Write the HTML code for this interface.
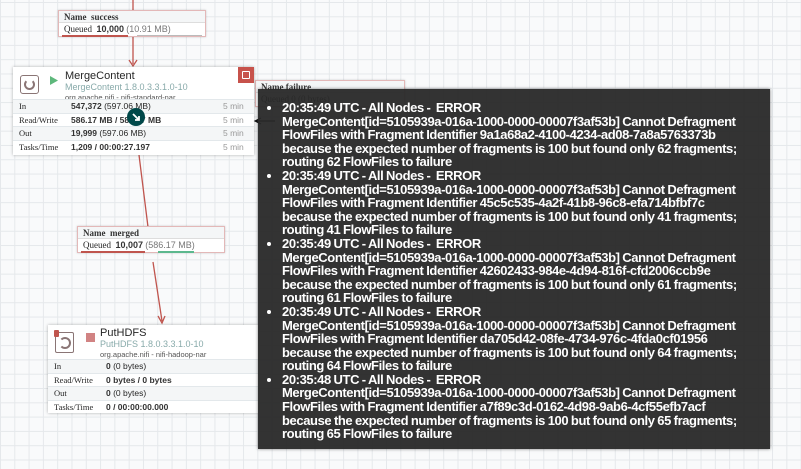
<!DOCTYPE html>
<html><head><style>
*{margin:0;padding:0;box-sizing:border-box}
body{width:801px;height:469px;overflow:hidden;position:relative;font-family:"Liberation Sans",sans-serif;
background-color:#f9fafb;
background-image:linear-gradient(#e5e8eb 1px,transparent 1px),linear-gradient(90deg,#e5e8eb 1px,transparent 1px);
background-size:14.3px 14.3px;background-position:0 2px}
.abs{position:absolute}
.lbl{position:absolute;background:#fff;border:1px solid #e3b8b8;box-shadow:0 0 2px rgba(0,0,0,.2);font-size:9px;color:#262626}
.lbl .r{height:12px;line-height:12px;padding-left:5px;font-family:"Liberation Serif",serif}
.lbl .r1{background:#f4f6f7;border-bottom:1px solid #ddd}
.card{position:absolute;background:#fff;box-shadow:0 0 3px rgba(0,0,0,.3);font-size:8.5px;color:#262626}
.row{height:13.5px;line-height:13.5px;position:relative;border-top:1px solid #e3e8eb}
.row.g{background:#f4f6f7}
.row span{position:absolute}
.k{font-family:"Liberation Serif",serif}
b{font-weight:bold;color:#333}
.t{color:#999}
.tip{position:absolute;left:258px;top:89px;width:512px;height:360px;background:rgba(40,40,40,.95);color:#fff;font-weight:bold;font-size:13px;line-height:13.6px;padding:12px 0 0 24px;box-shadow:0 0 3px rgba(0,0,0,.5);letter-spacing:-0.4px;word-spacing:-0.5px}
.tip ul{list-style:disc;padding-left:0;margin-left:0}
.tip li{margin-bottom:0;margin-left:0}
</style></head><body>
<svg class="abs" style="left:0;top:0" width="801" height="469">
<line x1="133" y1="0" x2="133" y2="10" stroke="#c0554e" stroke-width="1.3"/>
<line x1="133" y1="36" x2="133" y2="64" stroke="#c0554e" stroke-width="1.3"/>
<path d="M129 60 L133 66 L137 60" fill="none" stroke="#c0554e" stroke-width="1.3"/>
<line x1="139" y1="155" x2="148" y2="227" stroke="#c0554e" stroke-width="1.3"/>
<line x1="153" y1="262" x2="162" y2="321" stroke="#c0554e" stroke-width="1.3"/>
<path d="M158 316 L162 323 L165 316" fill="none" stroke="#c0554e" stroke-width="1.3"/>
</svg>
<div class="lbl" style="left:58px;top:10px;width:148px;height:27px">
<div class="r r1"><b>Name</b>&nbsp; <b>success</b></div>
<div class="r">Queued&nbsp; <b style="font-family:'Liberation Sans'">10,000</b> <span style="color:#777;font-family:'Liberation Sans'">(10.91 MB)</span></div>
<div class="abs" style="left:3px;top:24px;width:66px;height:2px;background:#c0554e"></div>
<div class="abs" style="left:78px;top:24px;width:65px;height:1px;background:#bbb"></div>
</div>
<div class="lbl" style="left:255px;top:80px;width:150px;height:27px">
<div class="r r1"><b>Name failure</b></div><div class="r">Queued 0 (0 bytes)</div></div>
<div class="card" style="left:13px;top:67px;width:241px;height:88px">
<div class="abs" style="left:7px;top:8px;width:19px;height:19px;border:1px solid #8a7575;border-radius:3px"></div>
<div class="abs" style="left:11px;top:12px;width:11px;height:11px;border:2px solid #8a7575;border-radius:50%;border-top-color:transparent"></div>
<svg class="abs" style="left:37px;top:9px" width="8" height="9"><path d="M0 0L8 4.5L0 9Z" fill="#5eb87c"/></svg>
<div class="abs" style="left:52px;top:3px;font-size:11px;color:#262626">MergeContent</div>
<div class="abs" style="left:52px;top:15px;font-size:9px;color:#8aa">MergeContent 1.8.0.3.3.1.0-10</div>
<div class="abs" style="left:52px;top:26px;font-size:7.5px;color:#555">org.apache.nifi - nifi-standard-nar</div>
<div class="abs" style="left:225px;top:0;width:16px;height:16px;background:#c7524b"><div class="abs" style="left:4px;top:4px;width:8px;height:8px;border:1px solid #fff;border-radius:1px"></div></div>
<div class="abs" style="left:0;top:32px;width:241px">
<div class="row g"><span class="k" style="left:6px">In</span><span style="left:58px"><b>547,372</b> (597.06 MB)</span><span class="t" style="left:210px">5 min</span></div>
<div class="row"><span class="k" style="left:6px">Read/Write</span><span style="left:58px"><b>586.17 MB / 586.17 MB</b></span><span class="t" style="left:210px">5 min</span></div>
<div class="row g"><span class="k" style="left:6px">Out</span><span style="left:58px"><b>19,999</b> (597.06 MB)</span><span class="t" style="left:210px">5 min</span></div>
<div class="row"><span class="k" style="left:6px">Tasks/Time</span><span style="left:58px"><b>1,209 / 00:00:27.197</b></span><span class="t" style="left:210px">5 min</span></div>
</div>
<div class="abs" style="left:114px;top:41px;width:18px;height:18px;border-radius:50%;background:#004849"><svg width="18" height="18"><path d="M6 6L12 12M12 8V12H8" stroke="#fff" stroke-width="1.8" fill="none"/></svg></div>
</div>
<div class="lbl" style="left:77px;top:226px;width:148px;height:27px">
<div class="r r1"><b>Name</b>&nbsp; <b>merged</b></div>
<div class="r">Queued&nbsp; <b style="font-family:'Liberation Sans'">10,007</b> <span style="color:#777;font-family:'Liberation Sans'">(586.17 MB)</span></div>
<div class="abs" style="left:3px;top:24px;width:64px;height:2px;background:#c0554e"></div>
<div class="abs" style="left:80px;top:24px;width:36px;height:2px;background:#5cb88e"></div>
</div>
<div class="card" style="left:48px;top:325px;width:210px;height:88px">
<div class="abs" style="left:7px;top:7px;width:19px;height:21px;border:1px solid #8a7575;border-radius:2px"></div>
<div class="abs" style="left:11px;top:12px;width:12px;height:12px;border:2px solid #8a7575;border-radius:50%;border-left-color:transparent"></div>
<div class="abs" style="left:6px;top:5px;width:5px;height:7px;background:#c0554e;border-radius:1px"></div>
<div class="abs" style="left:38px;top:8px;width:9px;height:9px;background:#d18383"></div>
<div class="abs" style="left:52px;top:2px;font-size:11px;color:#262626">PutHDFS</div>
<div class="abs" style="left:52px;top:14px;font-size:9px;color:#8aa">PutHDFS 1.8.0.3.3.1.0-10</div>
<div class="abs" style="left:52px;top:25px;font-size:7.5px;color:#555">org.apache.nifi - nifi-hadoop-nar</div>
<div class="abs" style="left:0;top:34px;width:210px">
<div class="row g"><span class="k" style="left:6px">In</span><span style="left:58px"><b>0</b> (0 bytes)</span></div>
<div class="row"><span class="k" style="left:6px">Read/Write</span><span style="left:58px"><b>0 bytes / 0 bytes</b></span></div>
<div class="row g"><span class="k" style="left:6px">Out</span><span style="left:58px"><b>0</b> (0 bytes)</span></div>
<div class="row"><span class="k" style="left:6px">Tasks/Time</span><span style="left:58px"><b>0 / 00:00:00.000</b></span></div>
</div></div>
<svg class="abs" style="left:0;top:0" width="801" height="469"><line x1="256" y1="121" x2="275" y2="121" stroke="#111" stroke-width="1.2"/><path d="M261 118L255 121L261 124" fill="none" stroke="#111" stroke-width="1.2"/></svg>
<div class="tip"><ul>
<li>20:35:49 UTC - All Nodes -&nbsp; ERROR<br>MergeContent[id=5105939a-016a-1000-0000-00007f3af53b] Cannot Defragment<br>FlowFiles with Fragment Identifier 9a1a68a2-4100-4234-ad08-7a8a5763373b<br>because the expected number of fragments is 100 but found only 62 fragments;<br>routing 62 FlowFiles to failure</li>
<li>20:35:49 UTC - All Nodes -&nbsp; ERROR<br>MergeContent[id=5105939a-016a-1000-0000-00007f3af53b] Cannot Defragment<br>FlowFiles with Fragment Identifier 45c5c535-4a2f-41b8-96c8-efa714bfbf7c<br>because the expected number of fragments is 100 but found only 41 fragments;<br>routing 41 FlowFiles to failure</li>
<li>20:35:49 UTC - All Nodes -&nbsp; ERROR<br>MergeContent[id=5105939a-016a-1000-0000-00007f3af53b] Cannot Defragment<br>FlowFiles with Fragment Identifier 42602433-984e-4d94-816f-cfd2006ccb9e<br>because the expected number of fragments is 100 but found only 61 fragments;<br>routing 61 FlowFiles to failure</li>
<li>20:35:49 UTC - All Nodes -&nbsp; ERROR<br>MergeContent[id=5105939a-016a-1000-0000-00007f3af53b] Cannot Defragment<br>FlowFiles with Fragment Identifier da705d42-08fe-4734-976c-4fda0cf01956<br>because the expected number of fragments is 100 but found only 64 fragments;<br>routing 64 FlowFiles to failure</li>
<li>20:35:48 UTC - All Nodes -&nbsp; ERROR<br>MergeContent[id=5105939a-016a-1000-0000-00007f3af53b] Cannot Defragment<br>FlowFiles with Fragment Identifier a7f89c3d-0162-4d98-9ab6-4cf55efb7acf<br>because the expected number of fragments is 100 but found only 65 fragments;<br>routing 65 FlowFiles to failure</li>
</ul></div>
</body></html>
